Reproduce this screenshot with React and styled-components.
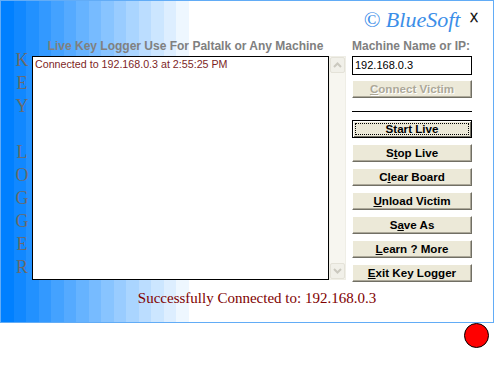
import React from 'react';
import styled, { createGlobalStyle } from 'styled-components';

const GlobalStyle = createGlobalStyle`
  html, body { margin: 0; padding: 0; background: #fff; }
  body { font-family: "Liberation Sans", Arial, sans-serif; }
`;

// stepped blue -> white bands, like the old form's gradient fill
const bands = (() => {
  const stops = [];
  const w = 12.5;
  for (let i = 0; i < 15; i++) {
    const t = i / 15;
    const r = Math.round(0 + 255 * t);
    const g = Math.round(128 + 127 * t);
    stops.push(`rgb(${r},${g},255) ${i * w}px ${(i + 1) * w}px`);
  }
  stops.push(`#fff ${15 * w}px 100%`);
  return `linear-gradient(to right, ${stops.join(', ')})`;
})();

const Window = styled.div`
  position: relative;
  box-sizing: border-box;
  width: 494px;
  height: 323px;
  border: 1px solid #62acf6;
  background: ${bands};
  display: flex;
  flex-direction: column;
`;

const Close = styled.div`
  position: absolute;
  top: 10px;
  right: 15px;
  font: 12px "Liberation Sans", Arial, sans-serif;
  color: #000;
  -webkit-text-stroke: 0.3px #000;
`;

const Body = styled.div`
  display: flex;
`;

const Letters = styled.div`
  width: 31px;
  box-sizing: border-box;
  padding: 48px 0 0 11px;
  display: flex;
  flex-direction: column;
  align-items: center;
  font: 18px/23px "Liberation Serif", "Times New Roman", serif;
  color: #6b6b6b;
`;

const Letter = styled.span`
  height: 23px;
`;

const Center = styled.div`
  width: 314px;
  padding-top: 39px;
  display: flex;
  flex-direction: column;
`;

const Caption = styled.div`
  font: bold 12px/13px "Liberation Sans", Arial, sans-serif;
  color: #808080;
  text-align: ${p => p.$align || 'center'};
  padding-right: ${p => (p.$align ? 0 : 7)}px;
  white-space: nowrap;
`;

const MemoRow = styled.div`
  margin-top: 3px;
  display: flex;
  height: 224px;
`;

const Memo = styled.div`
  box-sizing: border-box;
  width: 297px;
  height: 100%;
  border: 1px solid #000;
  background: #fff;
  padding: 1px 2px;
  font: 10.7px/13px "Liberation Sans", Arial, sans-serif;
  color: #7d1f1f;
`;

const Scroll = styled.div`
  box-sizing: border-box;
  width: 17px;
  height: 100%;
  background: #f7f6f0;
  border: 1px solid #efeee6;
  display: flex;
  flex-direction: column;
  justify-content: space-between;
`;

const ScrollBtn = styled.div`
  box-sizing: border-box;
  height: 16px;
  background: #f1f0e9;
  border: 1px solid #e4e2d8;
  border-radius: 2px;
  display: flex;
  align-items: center;
  justify-content: center;
`;

const Side = styled.div`
  width: 120px;
  margin-left: 6px;
  display: flex;
  flex-direction: column;
`;

const Brand = styled.div`
  box-sizing: border-box;
  height: 39px;
  padding-top: 6px;
  text-align: center;
  font: italic 22px/26px "Liberation Serif", "Times New Roman", serif;
  color: #3b8ee8;
  white-space: nowrap;
`;

const Input = styled.div`
  box-sizing: border-box;
  margin-top: 3px;
  height: 19px;
  border: 1px solid #000;
  background: #fff;
  padding: 0 2px;
  font: 11px/17px "Liberation Sans", Arial, sans-serif;
  color: #000;
`;

const Divider = styled.div`
  margin: 13px 0 8px;
  height: 1px;
  background: #000;
`;

const Buttons = styled.div`
  display: flex;
  flex-direction: column;
  gap: 6px;
`;

const Button = styled.div`
  position: relative;
  box-sizing: border-box;
  height: 18px;
  margin-top: ${p => p.$top || 0}px;
  background: #ece9d8;
  border: 1px solid;
  border-color: ${p => (p.$focused ? '#000' : '#fff #716f64 #716f64 #fff')};
  box-shadow: ${p => (p.$focused
    ? 'inset 1px 1px #fff, inset -1px -1px #716f64'
    : 'inset -1px -1px #aca899')};
  font: bold 11.6px/16px "Liberation Sans", Arial, sans-serif;
  color: ${p => (p.$disabled ? '#aca899' : '#000')};
  text-shadow: ${p => (p.$disabled ? '1px 1px #fff' : 'none')};
  text-align: center;
  white-space: nowrap;
  u { text-decoration: underline; }
  ${p => p.$focused && `
    &::after {
      content: '';
      position: absolute;
      inset: 2px;
      border: 1px dotted #000;
    }
  `}
`;

const Status = styled.div`
  margin-top: 7px;
  padding-left: 20px;
  text-align: center;
  font: 15px/18px "Liberation Serif", "Times New Roman", serif;
  color: #800000;
  white-space: nowrap;
`;

const Footer = styled.div`
  width: 494px;
  display: flex;
  justify-content: flex-end;
  padding-right: 5px;
  box-sizing: border-box;
`;

const Lamp = styled.div`
  width: 25px;
  height: 25px;
  box-sizing: border-box;
  border-radius: 50%;
  background: #ff0000;
  border: 1px solid #000;
`;

const Chevron = ({ down }) => (
  <svg width="9" height="6" viewBox="0 0 9 6">
    <path
      d={down ? 'M1 1 L4.5 4.5 L8 1' : 'M1 5 L4.5 1.5 L8 5'}
      fill="none"
      stroke="#cbc9bf"
      strokeWidth="2"
    />
  </svg>
);

const buttons = [
  { label: <>Start Live</>, focused: true },
  { label: <>S<u>t</u>op Live</> },
  { label: <>C<u>l</u>ear Board</> },
  { label: <><u>U</u>nload Victim</> },
  { label: <>S<u>a</u>ve As</> },
  { label: <><u>L</u>earn ? More</> },
  { label: <><u>E</u>xit Key Logger</> },
];

export default function App() {
  return (
    <>
      <GlobalStyle />
      <Window>
        <Close>X</Close>
        <Body>
          <Letters>
            {'KEY LOGGER'.split('').map((c, i) => (
              <Letter key={i}>{c === ' ' ? '\u00a0' : c}</Letter>
            ))}
          </Letters>
          <Center>
            <Caption>Live Key Logger Use For Paltalk or Any Machine</Caption>
            <MemoRow>
              <Memo>Connected to 192.168.0.3 at 2:55:25 PM</Memo>
              <Scroll>
                <ScrollBtn><Chevron /></ScrollBtn>
                <ScrollBtn><Chevron down /></ScrollBtn>
              </Scroll>
            </MemoRow>
          </Center>
          <Side>
            <Brand>© BlueSoft</Brand>
            <Caption $align="left">Machine Name or IP:</Caption>
            <Input>192.168.0.3</Input>
            <Button $top={5} $disabled><u>C</u>onnect Victim</Button>
            <Divider />
            <Buttons>
              {buttons.map((b, i) => (
                <Button key={i} $focused={b.focused}>{b.label}</Button>
              ))}
            </Buttons>
          </Side>
        </Body>
        <Status>Successfully Connected to: 192.168.0.3</Status>
      </Window>
      <Footer>
        <Lamp />
      </Footer>
    </>
  );
}
